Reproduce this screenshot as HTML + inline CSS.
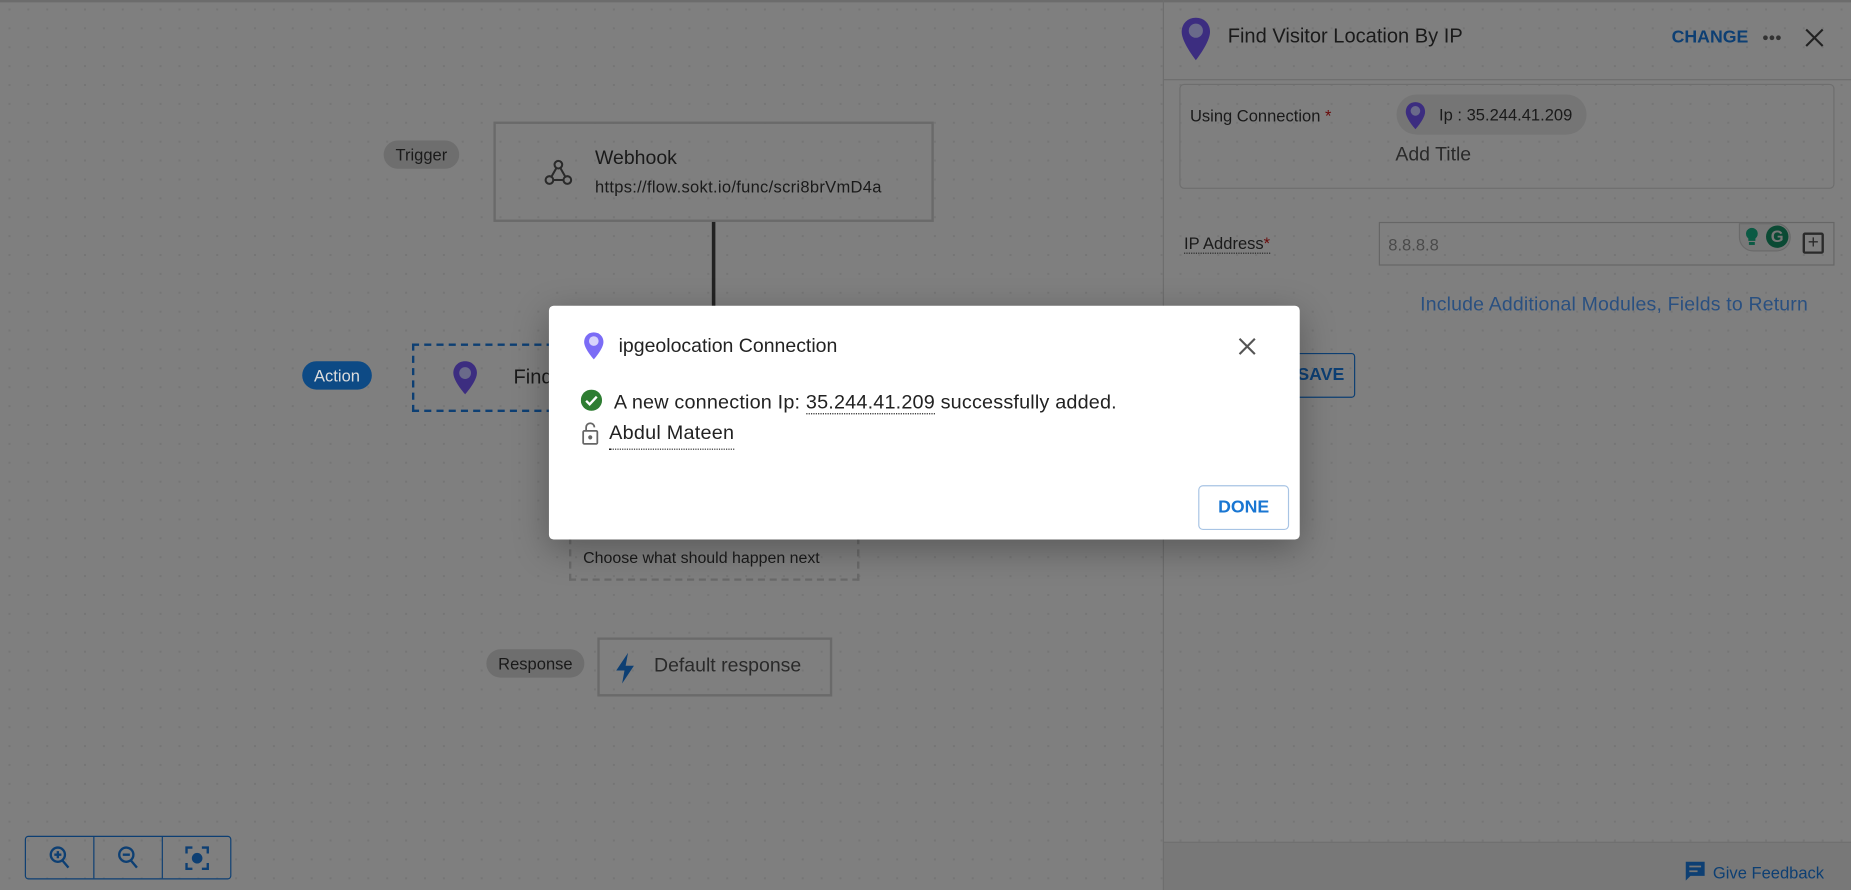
<!DOCTYPE html>
<html><head><meta charset="utf-8"><style>
*{box-sizing:border-box;margin:0;padding:0}
html,body{width:1851px;height:890px;overflow:hidden;background:#7f7f7f;font-family:"Liberation Sans",sans-serif}
#w{position:absolute;left:0;top:0;width:1568px;height:754px;transform:scale(1.1805);transform-origin:0 0;
background-color:#7f7f7f;background-image:radial-gradient(#757575 1px,transparent 1px);background-size:16px 16px}
.a{position:absolute}
.pill{position:absolute;background:#6e6e6e;border-radius:12px;color:#1a1a1a;font-size:14px;padding:4px 10px}
.box{position:absolute;border:2px solid #6a6a6a;color:#1a1a1a}
</style></head><body><div id="w">
<div class="a" style="left:0;top:0;width:1568px;height:2px;background:#6c6c6c"></div>
<div class="pill" style="left:325px;top:119px">Trigger</div>
<div class="box" style="left:418px;top:103px;width:373px;height:85px">
<svg class="a" style="left:40px;top:28px" width="26" height="26" viewBox="0 0 24 24" fill="none" stroke="#2a2a2a" stroke-width="1.6"><circle cx="12" cy="6" r="3"/><circle cx="5" cy="18" r="3"/><circle cx="19" cy="18" r="3"/><path d="M10.5 8.5 6.5 15.5M8 18h8M13.5 8.5l4 7"/></svg>
<div class="a" style="left:84px;top:20px;font-size:16.5px">Webhook</div>
<div class="a" style="left:84px;top:45px;font-size:14px;letter-spacing:0.25px;white-space:nowrap">https://flow.sokt.io/func/scri8brVmD4a</div></div>
<div class="a" style="left:603px;top:188px;width:3px;height:75px;background:#222"></div>
<div class="pill" style="left:256px;top:306px;background:#0d4a85;color:#ddd">Action</div>
<div class="a" style="left:349px;top:291px;width:120px;height:58px;border:2px dashed #0d3f73"></div>
<svg class="a" style="left:383px;top:305px" width="22" height="30" viewBox="0 0 22 30"><path d="M11 1C5 1 1 5.5 1 11c0 7 10 18 10 18s10-11 10-18C21 5.5 17 1 11 1z" fill="#3c2d80"/><circle cx="11" cy="11" r="5" fill="#6a6a8a"/></svg>
<div class="a" style="left:435px;top:310px;font-size:17px;color:#1a1a1a">Find</div>
<div class="a" style="left:482px;top:455px;width:246px;height:37px;border:2px dashed #6a6a6a;font-size:13.5px;color:#1a1a1a;padding:8px 0 0 10px;white-space:nowrap">Choose what should happen next</div>
<div class="pill" style="left:412px;top:550px">Response</div>
<div class="box" style="left:506px;top:540px;width:199px;height:50px">
<svg class="a" style="left:12px;top:10px" width="20" height="28" viewBox="0 0 20 28"><path d="M12 1 2 16h7l-2 11 10-15h-7z" fill="#0d3f73"/></svg>
<div class="a" style="left:46px;top:13px;font-size:16.5px;color:#2a2a2a;white-space:nowrap">Default response</div></div>
<div class="a" style="left:21px;top:708px;width:175px;height:37px;border:1px solid #0d3f73;border-radius:3px;display:flex">
<div style="flex:1;border-right:1px solid #0d3f73;display:flex;align-items:center;justify-content:center"><svg width="20" height="22" viewBox="0 0 20 22" fill="none" stroke="#0d3f73" stroke-width="2"><circle cx="8" cy="8" r="6"/><path d="M12 13l5 6M8 5v6M5 8h6"/></svg></div>
<div style="flex:1;border-right:1px solid #0d3f73;display:flex;align-items:center;justify-content:center"><svg width="20" height="22" viewBox="0 0 20 22" fill="none" stroke="#0d3f73" stroke-width="2"><circle cx="8" cy="8" r="6"/><path d="M12 13l5 6M5 8h6"/></svg></div>
<div style="flex:1;display:flex;align-items:center;justify-content:center"><svg width="22" height="22" viewBox="0 0 22 22" fill="none" stroke="#0d3f73" stroke-width="2"><path d="M2 7V2h5M15 2h5v5M20 15v5h-5M7 20H2v-5"/><circle cx="11" cy="11" r="3.5" fill="#0d3f73"/></svg></div></div>
<!-- right panel -->
<div class="a" style="left:985px;top:0;width:1px;height:754px;background:#6e6e6e"></div>
<div class="a" style="left:986px;top:67px;width:582px;height:1px;background:#6e6e6e"></div>
<svg class="a" style="left:1000px;top:14px" width="26" height="38" viewBox="0 0 26 38"><path d="M13 1C6 1 1 6 1 13c0 9 12 24 12 24s12-15 12-24C25 6 20 1 13 1z" fill="#3c2d80"/><circle cx="13" cy="12" r="6" fill="#6a6a8a"/></svg>
<div class="a" style="left:1040px;top:21px;font-size:17px;color:#1a1a1a">Find Visitor Location By IP</div>
<div class="a" style="left:1416px;top:23px;font-size:15px;font-weight:bold;color:#0d3f73">CHANGE</div>
<svg class="a" style="left:1493px;top:29px" width="16" height="6" viewBox="0 0 16 6"><circle cx="2.5" cy="3" r="2" fill="#333"/><circle cx="8" cy="3" r="2" fill="#333"/><circle cx="13.5" cy="3" r="2" fill="#333"/></svg>
<svg class="a" style="left:1529px;top:24px" width="16" height="16" viewBox="0 0 16 16" stroke="#222" stroke-width="1.8"><path d="M1 1l14 14M15 1 1 15"/></svg>
<div class="a" style="left:999px;top:71px;width:555px;height:89px;border:1px solid #6e6e6e;border-radius:4px"></div>
<div class="a" style="left:1008px;top:90px;font-size:14px;color:#1a1a1a">Using Connection <span style="color:#6a0a0a">*</span></div>
<div class="a" style="left:1183px;top:80px;width:161px;height:34px;border-radius:17px;background:#757575"></div>
<svg class="a" style="left:1190px;top:85px" width="18" height="26" viewBox="0 0 22 30"><path d="M11 1C5 1 1 5.5 1 11c0 7 10 18 10 18s10-11 10-18C21 5.5 17 1 11 1z" fill="#3c2d80"/><circle cx="11" cy="10" r="5" fill="#6a6a8a"/></svg>
<div class="a" style="left:1219px;top:89px;font-size:14px;color:#1a1a1a">Ip : 35.244.41.209</div>
<div class="a" style="left:1182px;top:122px;font-size:16.5px;color:#2a2a2a">Add Title</div>
<div class="a" style="left:1003px;top:198px;font-size:14px;color:#1a1a1a;border-bottom:1px dotted #222">IP Address<span style="color:#6a0a0a">*</span></div>
<div class="a" style="left:1168px;top:188px;width:386px;height:37px;border:1px solid #666"></div>
<div class="a" style="left:1176px;top:199px;font-size:14px;color:#4a4a4a">8.8.8.8</div>
<div class="a" style="left:1473px;top:189px;width:44px;height:24px;border-radius:0 12px 12px 12px;background:#787878;border:1px solid #6a6a6a"></div>
<svg class="a" style="left:1478px;top:192px" width="12" height="17" viewBox="0 0 12 17"><path d="M6 1a5 5 0 0 0-3 9v2h6v-2a5 5 0 0 0-3-9z" fill="#0b5a44"/><rect x="3.5" y="13" width="5" height="2.5" fill="#0b5a44"/></svg>
<div class="a" style="left:1496px;top:191px;width:19px;height:19px;border-radius:50%;background:#0b4a34;color:#777;font-size:14px;font-weight:bold;text-align:center;line-height:19px">G</div>
<div class="a" style="left:1527px;top:197px;width:18px;height:18px;border:2px solid #2a2a2a;border-radius:2px;font-size:16px;line-height:13px;text-align:center;color:#2a2a2a">+</div>
<div class="a" style="left:1203px;top:249px;font-size:16.5px;letter-spacing:0.15px;color:#2a5080;white-space:nowrap">Include Additional Modules, Fields to Return</div>
<div class="a" style="left:1080px;top:299px;width:68px;height:38px;border:1px solid #0d3f73;border-radius:3px;font-size:15px;color:#0d3f73;padding:9px 0 0 18px;font-weight:bold">SAVE</div>
<div class="a" style="left:986px;top:713px;width:582px;height:41px;background:#787878;border-top:1px solid #707070"></div>
<svg class="a" style="left:1427px;top:729px" width="18" height="18" viewBox="0 0 18 18"><path d="M1 1h16v12H5l-4 4z" fill="#0d3f73"/><path d="M4 5h10M4 9h7" stroke="#777" stroke-width="1.5"/></svg>
<div class="a" style="left:1451px;top:731px;font-size:14px;color:#0d3f73">Give Feedback</div>
<!-- modal -->
<div class="a" style="left:465px;top:259px;width:636px;height:198px;background:#fff;border-radius:4px;box-shadow:0 8px 30px rgba(0,0,0,.3)">
<svg class="a" style="left:29px;top:21px" width="18" height="26" viewBox="0 0 22 30"><path d="M11 1C5 1 1 5.5 1 11c0 7 10 18 10 18s10-11 10-18C21 5.5 17 1 11 1z" fill="#7b6cf6"/><circle cx="11" cy="10" r="5" fill="#d7d3fb"/></svg>
<div class="a" style="left:59px;top:25px;font-size:16.5px;color:#222">ipgeolocation Connection</div>
<svg class="a" style="left:584px;top:27px" width="15" height="15" viewBox="0 0 15 15" stroke="#555" stroke-width="1.8"><path d="M1 1l13 13M14 1 1 14"/></svg>
<svg class="a" style="left:27px;top:71px" width="18" height="18" viewBox="0 0 18 18"><circle cx="9" cy="9" r="9" fill="#2e7d32"/><path d="M4.5 9.5l3 3 6-6.5" stroke="#fff" stroke-width="2" fill="none"/></svg>
<div class="a" style="left:55px;top:72px;font-size:16.8px;letter-spacing:0.15px;color:#222;white-space:nowrap">A new connection Ip: <span style="border-bottom:1px dotted #222">35.244.41.209</span> successfully added.</div>
<svg class="a" style="left:27px;top:98px" width="16" height="20" viewBox="0 0 16 20" fill="none" stroke="#666" stroke-width="1.5"><rect x="2" y="8" width="12" height="11" rx="1"/><path d="M4.5 8V5a3.5 3.5 0 0 1 7 0"/><circle cx="8" cy="13.5" r="1" fill="#666"/></svg>
<div class="a" style="left:51px;top:98px;font-size:16.8px;letter-spacing:0.2px;color:#222;border-bottom:1px dotted #222;padding-bottom:3px">Abdul Mateen</div>
<div class="a" style="left:550px;top:152px;width:77px;height:38px;border:1px solid #a8c4e4;border-radius:4px;color:#1976d2;font-size:15px;font-weight:bold;text-align:center;line-height:36px">DONE</div>
</div>
</div></body></html>
